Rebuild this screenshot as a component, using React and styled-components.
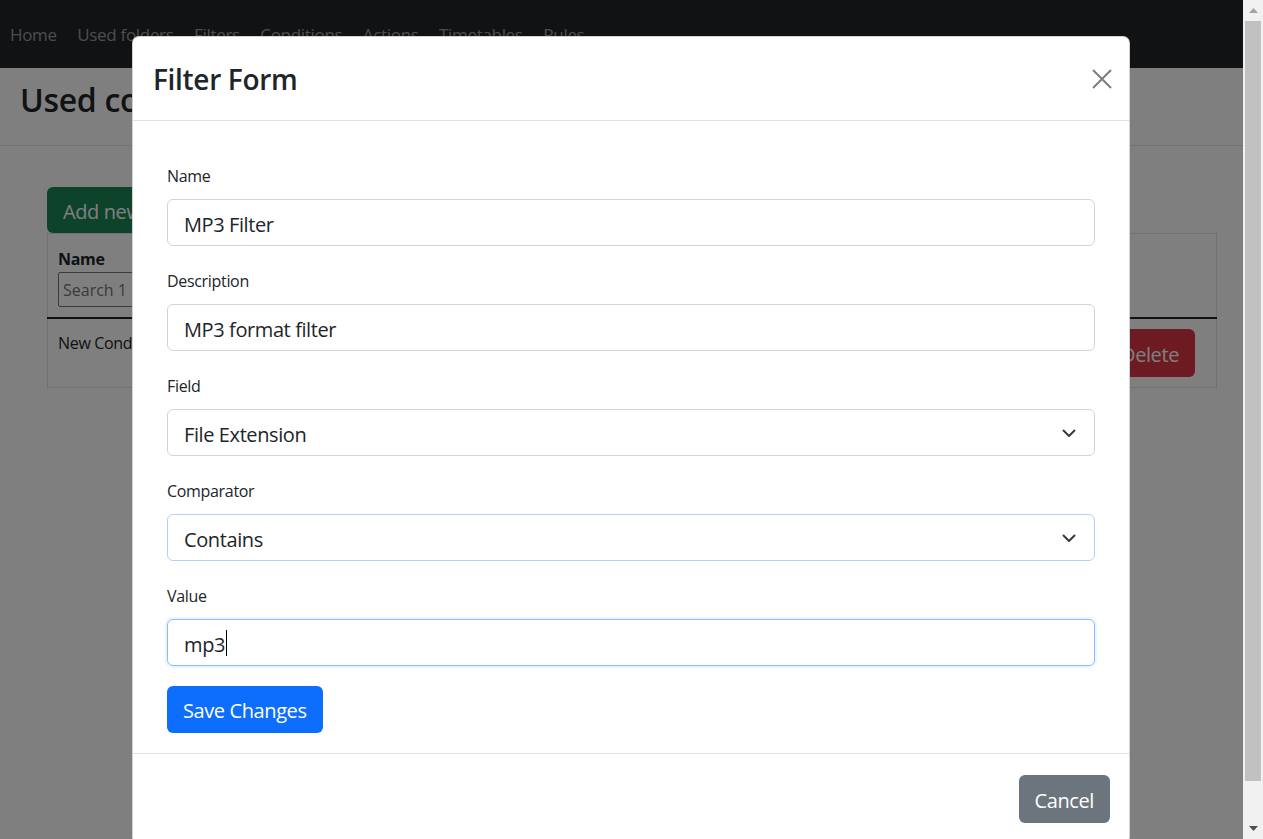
import React from "react";
import styled, { createGlobalStyle } from "styled-components";

const FONT = `"Segoe UI", "Open Sans", "Noto Sans", "Liberation Sans", sans-serif`;

const GlobalStyle = createGlobalStyle`
  html, body { margin: 0; padding: 0; height: 100%; overflow: hidden; }
  body { font-family: ${FONT}; color: #212529; background: #fff; letter-spacing: -0.02em; }
  * { box-sizing: border-box; }
`;

const Screen = styled.div`
  display: flex;
  width: 1263px;
  height: 839px;
  overflow: hidden;
`;

const Viewport = styled.div`
  position: relative;
  flex: 1;
  min-width: 0;
  height: 100%;
  overflow: hidden;
  background: #fff;
`;

const Navbar = styled.nav`
  height: 68px;
  background: #212529;
  display: flex;
  align-items: center;
  gap: 20.5px;
  padding-left: 10px;
`;

const NavLink = styled.a`
  color: rgba(255, 255, 255, 0.55);
  font-size: 17px;
  text-decoration: none;
`;

const PageHeader = styled.header`
  height: 78px;
  padding: 13px 0 0 20px;
  border-bottom: 1px solid #dee2e6;
`;

const PageTitle = styled.h1`
  margin: 0;
  font-size: 32px;
  font-weight: 600;
  line-height: 1.2;
`;

const Content = styled.main`
  margin: 41px 26px 0 47px;
`;

const Button = styled.button`
  height: ${(p) => p.$h || 48}px;
  padding: 2px 16px 0;
  border: 0;
  border-radius: 6px;
  font-family: ${FONT};
  font-size: 20px;
  letter-spacing: -0.02em;
  color: #fff;
  background: ${(p) => p.$bg};
  cursor: pointer;
`;

const Table = styled.table`
  width: 100%;
  border-collapse: collapse;
  border: 1px solid #dee2e6;
  font-size: 16px;
`;

const Th = styled.th`
  text-align: left;
  vertical-align: top;
  padding: 13px 10px 10px;
  border-bottom: 2px solid #212529;
  font-weight: 700;
  line-height: 24px;
`;

const Td = styled.td`
  vertical-align: top;
  padding: ${(p) => (p.$actions ? "10px 21px 10px 10px" : "12px 10px 11px")};
  text-align: ${(p) => (p.$actions ? "right" : "left")};
  line-height: 24px;
`;

const SearchInput = styled.input`
  display: block;
  width: 180px;
  height: 35px;
  margin-top: 1px;
  border: 1px solid #767676;
  border-radius: 2px;
  padding: 1px 4px 0;
  font-family: ${FONT};
  font-size: 16px;
  &::placeholder { color: #757575; }
`;

const Backdrop = styled.div`
  position: absolute;
  inset: 0;
  background: rgba(0, 0, 0, 0.5);
`;

const Modal = styled.div`
  position: absolute;
  left: 132px;
  top: 36px;
  width: 998px;
  background: #fff;
  border: 1px solid rgba(0, 0, 0, 0.175);
  border-radius: 7px;
`;

const ModalHeader = styled.div`
  height: 84px;
  display: flex;
  align-items: center;
  justify-content: space-between;
  padding: 2px 17px 0 20px;
  border-bottom: 1px solid #dee2e6;
`;

const ModalTitle = styled.h3`
  margin: 0;
  font-size: 28px;
  font-weight: 600;
  line-height: 1.2;
`;

const CloseButton = styled.button`
  display: flex;
  padding: 0;
  margin-top: -2px;
  border: 0;
  background: none;
  cursor: pointer;
`;

const ModalBody = styled.div`
  padding: 43px 34px 20px;
`;

const Group = styled.div`
  margin-bottom: ${(p) => (p.$last ? 20 : 23)}px;
`;

const Label = styled.label`
  display: block;
  font-size: 16px;
  line-height: 24px;
  margin-bottom: 11px;
`;

const controlBorder = (s) =>
  s === "focus" ? "#8bb9fe" : s === "soft" ? "#b3cffa" : "#ced4da";

const Control = styled.input`
  display: block;
  width: 100%;
  height: 47px;
  padding: 3px 16px 0;
  border: 1px solid ${(p) => controlBorder(p.$state)};
  border-radius: 6px;
  font-family: ${FONT};
  font-size: 20px;
  letter-spacing: -0.02em;
  color: #212529;
  background: #fff;
  outline: none;
`;

const FocusedBox = styled.div`
  display: flex;
  align-items: center;
  width: 100%;
  height: 47px;
  padding: 3px 16px 0;
  border: 1px solid ${controlBorder("focus")};
  border-radius: 6px;
  box-shadow: 0 0 0 2px rgba(13, 110, 253, 0.08);
  font-size: 20px;
  color: #212529;
`;

const Caret = styled.span`
  display: inline-block;
  width: 1px;
  height: 26px;
  margin: -2px 0 0 1px;
  background: #000;
`;

const SelectWrap = styled.div`
  position: relative;
`;

const Select = styled(Control).attrs({ as: "select" })`
  appearance: none;
  -webkit-appearance: none;
  padding-right: 48px;
`;

const Chevron = styled.svg`
  position: absolute;
  right: 18px;
  top: 50%;
  transform: translateY(-50%);
  pointer-events: none;
`;

const ModalFooter = styled.div`
  display: flex;
  justify-content: flex-end;
  padding: 21px 19px 20px;
  border-top: 1px solid #dee2e6;
`;

const Scrollbar = styled.div`
  width: 20px;
  height: 100%;
  background: #f1f1f1;
  display: flex;
  flex-direction: column;
`;

const ScrollArrow = styled.div`
  height: 21px;
  display: flex;
  align-items: center;
  justify-content: center;
`;

const ScrollTrack = styled.div`
  flex: 1;
  padding: 0 2px;
`;

const ScrollThumb = styled.div`
  height: 760px;
  background: #c1c1c1;
`;

const ChevronIcon = () => (
  <Chevron width="16" height="16" viewBox="0 0 16 16">
    <path d="M2.5 5.5l5.5 5.5 5.5-5.5" fill="none" stroke="#343a40" strokeWidth="2" strokeLinecap="round" strokeLinejoin="round" />
  </Chevron>
);

const SelectField = ({ value, state }) => (
  <SelectWrap>
    <Select value={value} $state={state} onChange={() => {}}>
      <option>{value}</option>
    </Select>
    <ChevronIcon />
  </SelectWrap>
);

const Arrow = ({ down }) => (
  <svg width="9" height="5" viewBox="0 0 9 5" style={down ? { transform: "rotate(180deg)" } : undefined}>
    <polygon points="4.5,0 9,5 0,5" fill={down ? "#505050" : "#a3a3a3"} />
  </svg>
);

export default function App() {
  return (
    <>
      <GlobalStyle />
      <Screen>
        <Viewport>
          <Navbar>
            {["Home", "Used folders", "Filters", "Conditions", "Actions", "Timetables", "Rules"].map((n) => (
              <NavLink key={n} href="#">{n}</NavLink>
            ))}
          </Navbar>
          <PageHeader>
            <PageTitle>Used conditions</PageTitle>
          </PageHeader>
          <Content>
            <Button $bg="#198754" $h={46}>Add new condition</Button>
            <Table>
              <thead>
                <tr>
                  <Th>
                    Name
                    <SearchInput placeholder="Search 1 records..." />
                  </Th>
                  <Th />
                </tr>
              </thead>
              <tbody>
                <tr>
                  <Td>New Condition</Td>
                  <Td $actions>
                    <Button $bg="#dc3545">Delete</Button>
                  </Td>
                </tr>
              </tbody>
            </Table>
          </Content>

          <Backdrop />
          <Modal>
            <ModalHeader>
              <ModalTitle>Filter Form</ModalTitle>
              <CloseButton aria-label="Close">
                <svg width="20" height="20" viewBox="0 0 20 20">
                  <path d="M1 1L19 19M19 1L1 19" stroke="#7d7d7d" strokeWidth="2" />
                </svg>
              </CloseButton>
            </ModalHeader>
            <ModalBody>
              <Group>
                <Label>Name</Label>
                <Control readOnly value="MP3 Filter" />
              </Group>
              <Group>
                <Label>Description</Label>
                <Control readOnly value="MP3 format filter" />
              </Group>
              <Group>
                <Label>Field</Label>
                <SelectField value="File Extension" />
              </Group>
              <Group>
                <Label>Comparator</Label>
                <SelectField value="Contains" state="soft" />
              </Group>
              <Group $last>
                <Label>Value</Label>
                <FocusedBox>
                  <span>mp3</span>
                  <Caret />
                </FocusedBox>
              </Group>
              <Button $bg="#0d6efd" $h={47}>Save Changes</Button>
            </ModalBody>
            <ModalFooter>
              <Button $bg="#6c757d">Cancel</Button>
            </ModalFooter>
          </Modal>
        </Viewport>
        <Scrollbar>
          <ScrollArrow><Arrow /></ScrollArrow>
          <ScrollTrack><ScrollThumb /></ScrollTrack>
          <ScrollArrow><Arrow down /></ScrollArrow>
        </Scrollbar>
      </Screen>
    </>
  );
}
